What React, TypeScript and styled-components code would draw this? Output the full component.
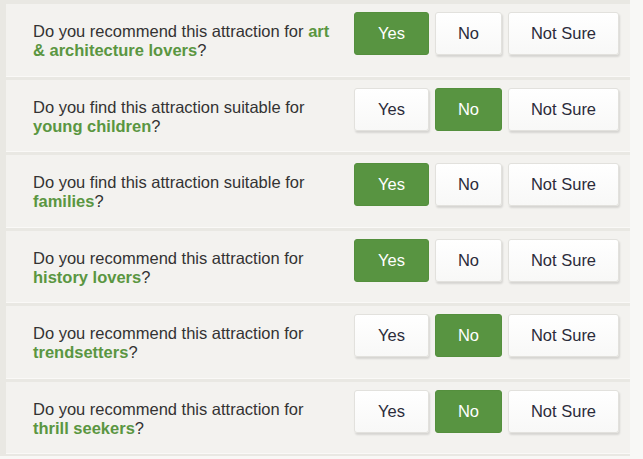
import React from "react";
import styled, { createGlobalStyle } from "styled-components";

type Answer = "yes" | "no" | "unsure";

const questions: { lead: string; topic: string; answer: Answer }[] = [
  { lead: "Do you recommend this attraction for", topic: "art & architecture lovers", answer: "yes" },
  { lead: "Do you find this attraction suitable for", topic: "young children", answer: "no" },
  { lead: "Do you find this attraction suitable for", topic: "families", answer: "yes" },
  { lead: "Do you recommend this attraction for", topic: "history lovers", answer: "yes" },
  { lead: "Do you recommend this attraction for", topic: "trendsetters", answer: "no" },
  { lead: "Do you recommend this attraction for", topic: "thrill seekers", answer: "no" },
];

const GlobalStyle = createGlobalStyle`
  html, body {
    margin: 0;
    padding: 0;
    background: #f8f8f6;
  }
  body {
    font-family: "Liberation Sans", Arial, sans-serif;
  }
`;

const Panel = styled.div`
  width: 632px;
  height: 456px;
  box-sizing: border-box;
  padding: 4px 0 0 6px;
  background: #e9e8e3;
  border-right: 2px solid #f8f8f6;
  display: flex;
  flex-direction: column;
  gap: 3px;
`;

const Row = styled.div`
  height: 72.5px;
  flex: none;
  box-sizing: border-box;
  background: #f3f2ef;
  display: flex;
  align-items: flex-start;
  padding: 8px 11px 0 27px;
  border-bottom: 1px solid #faf9f7;
`;

const Question = styled.p`
  margin: 0;
  padding-top: 10px;
  width: 305px;
  font-size: 16.5px;
  line-height: 19px;
  color: #333333;
`;

const Topic = styled.strong`
  color: #5a9641;
  font-weight: bold;
`;

const Choices = styled.div`
  margin-left: auto;
  display: flex;
  gap: 6px;
`;

const Choice = styled.button<{ $active: boolean; $width: number }>`
  width: ${(p) => p.$width}px;
  height: 43px;
  border-radius: 3px;
  font-family: "Liberation Sans", Arial, sans-serif;
  font-size: 16.5px;
  cursor: pointer;
  border: 1px solid ${(p) => (p.$active ? "#548f3d" : "#e2e1dd")};
  color: ${(p) => (p.$active ? "#ffffff" : "#2b2b3a")};
  background: ${(p) =>
    p.$active ? "#589441" : "linear-gradient(#ffffff, #f8f8f7)"};
  box-shadow: ${(p) =>
    p.$active ? "none" : "1px 2px 2px rgba(0, 0, 0, 0.12)"};
`;

const options: { key: Answer; label: string; width: number }[] = [
  { key: "yes", label: "Yes", width: 75 },
  { key: "no", label: "No", width: 67 },
  { key: "unsure", label: "Not Sure", width: 111 },
];

export default function App() {
  return (
    <>
      <GlobalStyle />
      <Panel>
        {questions.map((q) => (
          <Row key={q.topic}>
            <Question>
              {q.lead} <Topic>{q.topic}</Topic>?
            </Question>
            <Choices>
              {options.map((o) => (
                <Choice key={o.key} $active={q.answer === o.key} $width={o.width}>
                  {o.label}
                </Choice>
              ))}
            </Choices>
          </Row>
        ))}
      </Panel>
    </>
  );
}
